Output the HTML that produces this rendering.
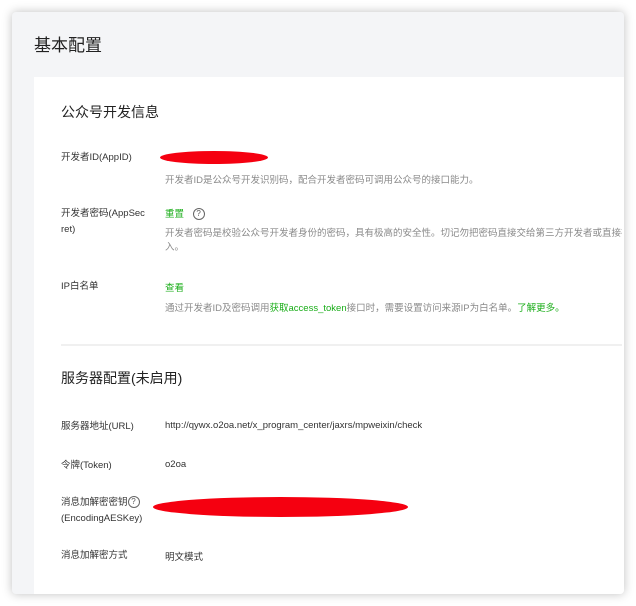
<!DOCTYPE html>
<html><head><meta charset="utf-8"><style>
*{margin:0;padding:0;box-sizing:border-box}
body{width:636px;height:606px;background:#fff;font-family:"Liberation Sans","Noto Sans CJK SC",sans-serif;position:relative;overflow:hidden}
.win{position:absolute;left:12px;top:12px;width:612px;height:582px;background:#f4f5f7;border-radius:4px;box-shadow:0 0 10px rgba(0,0,0,.25);overflow:hidden}
.t{position:absolute;font-size:17px;color:#222;left:22px;top:19px}
.card{position:absolute;left:22px;top:65px;width:600px;height:530px;background:#fff}
.clip{position:absolute;left:0;top:0;width:622px;height:606px;overflow:hidden}
.a{position:absolute;white-space:nowrap}
.h{font-size:14px;color:#222}
.l{font-size:9.5px;color:#333;line-height:16px}
.v{font-size:9.5px;color:#333}
.d{font-size:9.5px;color:#8a8a8a}
.g{color:#1aad19}
.red{position:absolute;background:#f50010;border-radius:50%}
.q{display:inline-block;width:12px;height:12px;border:1px solid #666;border-radius:50%;font-size:8px;text-align:center;line-height:10px;color:#555;vertical-align:middle}
</style></head><body>
<div class="win">
<div class="t">基本配置</div>
<div class="card"></div>
</div>
<div class="clip">
<div class="a h" style="left:61px;top:102px">公众号开发信息</div>
<div class="a l" style="left:61px;top:150px">开发者ID(AppID)</div>
<div class="red" style="left:160px;top:151px;width:108px;height:13px"></div>
<div class="a d" style="left:165px;top:172px">开发者ID是公众号开发识别码，配合开发者密码可调用公众号的接口能力。</div>
<div class="a l" style="left:61px;top:206px">开发者密码(AppSec<br>ret)</div>
<div class="a v g" style="left:165px;top:206px">重置 <span class="q" style="margin-left:6px">?</span></div>
<div class="a d" style="left:165px;top:227px;line-height:14px">开发者密码是校验公众号开发者身份的密码，具有极高的安全性。切记勿把密码直接交给第三方开发者或直接存储<br>入。</div>
<div class="a l" style="left:61px;top:279px">IP白名单</div>
<div class="a v g" style="left:165px;top:280px">查看</div>
<div class="a d" style="left:165px;top:300px">通过开发者ID及密码调用<span class="g">获取access_token</span>接口时，需要设置访问来源IP为白名单。<span class="g">了解更多。</span></div>
<div class="a" style="left:61px;top:344px;width:563px;height:2px;background:#f0f0f0"></div>
<div class="a h" style="left:61px;top:368px">服务器配置(未启用)</div>
<div class="a l" style="left:61px;top:419px">服务器地址(URL)</div>
<div class="a v" style="left:165px;top:420px">http://qywx.o2oa.net/x_program_center/jaxrs/mpweixin/check</div>
<div class="a l" style="left:61px;top:458px">令牌(Token)</div>
<div class="a v" style="left:165px;top:459px">o2oa</div>
<div class="a l" style="left:61px;top:495px">消息加解密密钥<span class="q">?</span><br>(EncodingAESKey)</div>
<div class="red" style="left:153px;top:497px;width:255px;height:20px"></div>
<div class="a l" style="left:61px;top:548px">消息加解密方式</div>
<div class="a v" style="left:165px;top:549px">明文模式</div>
</div>
</body></html>
